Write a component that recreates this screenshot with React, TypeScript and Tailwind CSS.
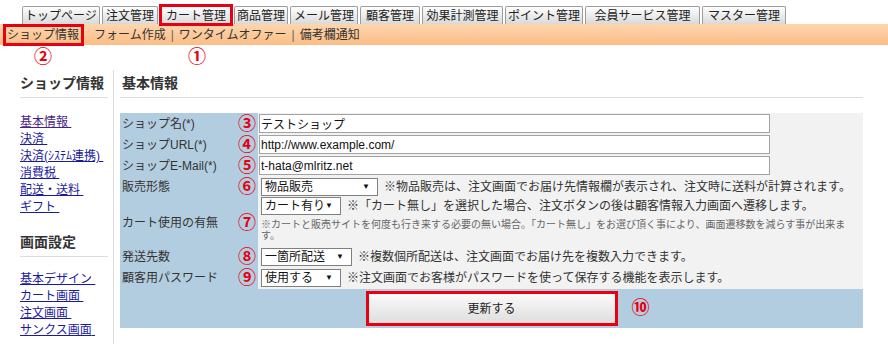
import React from "react";

const tabs = [
    { label: "トップページ", w: "w-[78px]", active: false },
    { label: "注文管理", w: "w-[56px]", active: false },
    { label: "カート管理", w: "w-[72px]", active: true },
    { label: "商品管理", w: "w-[54px]", active: false },
    { label: "メール管理", w: "w-[68px]", active: false },
    { label: "顧客管理", w: "w-[60px]", active: false },
    { label: "効果計測管理", w: "w-[81px]", active: false },
    { label: "ポイント管理", w: "w-[78px]", active: false },
    { label: "会員サービス管理", w: "w-[115px]", active: false },
    { label: "マスター管理", w: "w-[84px]", active: false },
];

const shopLinks = ["基本情報", "決済", "決済(ｼｽﾃﾑ連携)", "消費税", "配送・送料", "ギフト"];
const screenLinks = ["基本デザイン", "カート画面", "注文画面", "サンクス画面"];

const Mark: React.FC<{ n: string; className?: string }> = ({ n, className = "" }) => (
    <span className={`text-[18px] leading-[18px] font-bold text-[#e60012] ${className}`}>{n}</span>
);

const Select: React.FC<{ label: string; w: string }> = ({ label, w }) => (
    <div className={`${w} h-[18px] shrink-0 border border-[#808080] bg-white flex items-center justify-between pl-[3px] pr-[7px] leading-none whitespace-nowrap text-[#111]`}>
        <span>{label}</span>
        <span className="text-[8px]">▼</span>
    </div>
);

const Row: React.FC<{ label: string; n: string; h?: string; children: React.ReactNode }> = ({ label, n, h = "h-[21px]", children }) => (
    <div className={`flex ${h}`}>
        <div className="w-[138px] shrink-0 flex items-center justify-between pl-[2px] pr-[2px]">
            <span>{label}</span>
            <Mark n={n} />
        </div>
        <div className="flex-1 bg-[#f2f2f2] flex items-center pl-[1px]">{children}</div>
    </div>
);

const TextBox: React.FC<{ value: string }> = ({ value }) => (
    <input
        readOnly
        defaultValue={value}
        className="w-[511px] h-[19px] border border-[#a3a3a3] bg-white pl-[1px] text-[12px] leading-[17px] text-[#111] outline-none"
    />
);

const SideHeading: React.FC<{ text: string; className?: string }> = ({ text, className = "" }) => (
    <div className={`h-[26px] leading-[22px] text-[14px] font-bold text-[#333] border-b border-[#dcdcdc] ${className}`}>{text}</div>
);

export default function App() {
    return (
        <div className="relative w-[888px] h-[344px] overflow-hidden bg-white flex flex-col text-[12px] text-[#333] font-['Liberation_Sans','Noto_Sans_CJK_JP',sans-serif]">
            {/* top tabs */}
            <div className="flex items-end gap-[2px] pl-[22px] pt-[6px]">
                {tabs.map((t) => (
                    <div
                        key={t.label}
                        className={`relative ${t.w} h-[18px] flex items-center justify-center border border-b-0 border-[#9c9c9c] rounded-t-[2px] bg-[linear-gradient(to_bottom,#ffffff,#d9d9d9)] leading-none text-[#222]`}
                    >
                        {t.label}
                        {t.active && <span className="absolute -left-[2px] -right-[2px] -top-[3px] -bottom-[2px] border-[3px] border-[#e60012]" />}
                    </div>
                ))}
            </div>

            {/* sub menu */}
            <div className="h-[21px] flex items-center pl-[7px] bg-[linear-gradient(to_bottom,#fdd6ae,#fbbd86)] leading-none text-[#333]">
                <span className="relative">
                    ショップ情報
                    <span className="absolute -left-[4px] -right-[5px] -top-[5px] -bottom-[5px] border-[3px] border-[#e60012]" />
                </span>
                <span className="ml-[15px]">フォーム作成</span>
                <span className="mx-[5px] text-[#666]">|</span>
                <span>ワンタイムオファー</span>
                <span className="mx-[5px] text-[#666]">|</span>
                <span>備考欄通知</span>
            </div>

            <Mark n="②" className="absolute left-[34px] top-[48px]" />
            <Mark n="①" className="absolute left-[188px] top-[48px]" />

            <div className="flex flex-1 mt-[25px]">
                {/* side menu */}
                <div className="w-[114px] shrink-0 border-r border-[#dedede] pl-[20px] pr-[5px] pt-[2px]">
                    <SideHeading text="ショップ情報" />
                    <ul className="mt-[16px] leading-[17px]">
                        {shopLinks.map((l, i) => (
                            <li key={l}>
                                <a href="#" className={`underline ${i === 0 ? "text-[#4b1f86]" : "text-[#1a1aa0]"}`}>
                                    {l}{"\u00a0"}
                                </a>
                            </li>
                        ))}
                    </ul>
                    <SideHeading text="画面設定" className="mt-[15px]" />
                    <ul className="mt-[14px] leading-[17px]">
                        {screenLinks.map((l) => (
                            <li key={l}>
                                <a href="#" className="underline text-[#1a1aa0]">
                                    {l}{"\u00a0"}
                                </a>
                            </li>
                        ))}
                    </ul>
                </div>

                {/* main */}
                <div className="pl-[6px] pt-[2px]">
                    <div className="w-[743px] h-[26px] leading-[22px] pl-[2px] text-[14px] font-bold text-[#333] border-b border-[#dcdcdc]">基本情報</div>

                    <div className="mt-[15px] w-[743px] bg-[#b3cde0]">
                        <Row label="ショップ名(*)" n="③">
                            <TextBox value="テストショップ" />
                        </Row>
                        <Row label="ショップURL(*)" n="④">
                            <TextBox value="http://www.example.com/" />
                        </Row>
                        <Row label="ショップE-Mail(*)" n="⑤">
                            <TextBox value="t-hata@mlritz.net" />
                        </Row>
                        <Row label="販売形態" n="⑥">
                            <div className="flex items-center gap-[6px] pl-[2px]">
                                <Select label="物品販売" w="w-[117px]" />
                                <span>※物品販売は、注文画面でお届け先情報欄が表示され、注文時に送料が計算されます。</span>
                            </div>
                        </Row>
                        <div className="flex h-[49px]">
                            <div className="w-[138px] shrink-0 flex items-center justify-between pl-[2px] pr-[2px] pt-[2px]">
                                <span>カート使用の有無</span>
                                <Mark n="⑦" />
                            </div>
                            <div className="flex-1 bg-[#f2f2f2] pl-[3px] pr-[4px]">
                                <div className="flex items-center gap-[6px]">
                                    <Select label="カート有り" w="w-[80px]" />
                                    <span>※「カート無し」を選択した場合、注文ボタンの後は顧客情報入力画面へ遷移します。</span>
                                </div>
                                <p className="mt-[4px] text-[10px] leading-[11px] text-[#666]">
                                    ※カートと販売サイトを何度も行き来する必要の無い場合。「カート無し」をお選び頂く事により、画面遷移数を減らす事が出来ます。
                                </p>
                            </div>
                        </div>
                        <Row label="発送先数" n="⑧">
                            <div className="flex items-center gap-[6px] pl-[2px]">
                                <Select label="一箇所配送" w="w-[91px]" />
                                <span>※複数個所配送は、注文画面でお届け先を複数入力できます。</span>
                            </div>
                        </Row>
                        <Row label="顧客用パスワード" n="⑨" h="h-[22px]">
                            <div className="flex items-center gap-[6px] pl-[2px]">
                                <Select label="使用する" w="w-[80px]" />
                                <span>※注文画面でお客様がパスワードを使って保存する機能を表示します。</span>
                            </div>
                        </Row>
                        <div className="h-[39px] flex items-center justify-center">
                            <div className="relative">
                                <button className="w-[252px] h-[35px] border-[3px] border-[#e60012] bg-[linear-gradient(to_bottom,#fafafa,#dedede)] text-[12px] text-[#222]">
                                    更新する
                                </button>
                                <Mark n="⑩" className="absolute left-full ml-[14px] top-[8px]" />
                            </div>
                        </div>
                    </div>
                </div>
            </div>
        </div>
    );
}
